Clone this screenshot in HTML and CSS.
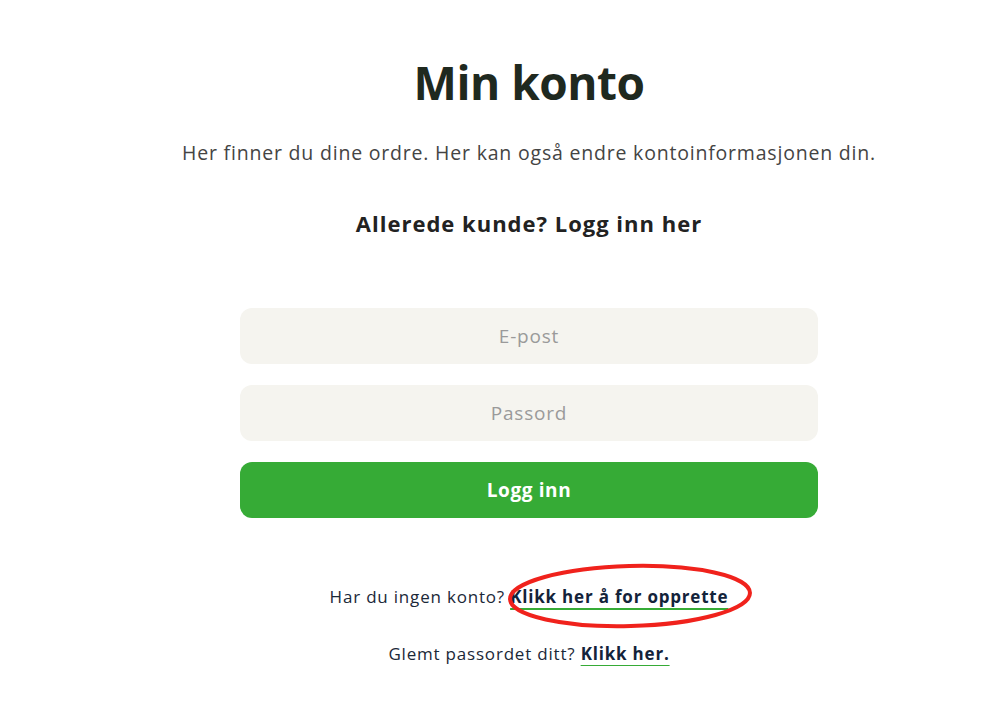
FILE: index.html
```html
<!DOCTYPE html>
<html>
<head>
    <title>Min konto</title>
    <link rel="stylesheet" href="styles.css">
</head>
<body>
    <div class="page">
        <h1>Min konto</h1>
        <p class="intro">Her finner du dine ordre. Her kan også endre kontoinformasjonen din.</p>
        <h2>Allerede kunde? Logg inn her</h2>

        <form class="login" action="#" method="POST">
            <input type="email" name="email" placeholder="E-post">
            <input type="password" name="password" placeholder="Passord">
            <button type="submit">Logg inn</button>
        </form>

        <p class="help signup">Har du ingen konto? <span class="mark"><a href="#">Klikk her å for opprette</a><svg class="circle" width="254" height="72" viewBox="0 0 254 72"><ellipse cx="127" cy="36" rx="120" ry="30" transform="rotate(-1.5 127 36)" fill="none" stroke="#f0221c" stroke-width="4"/></svg></span></p>
        <p class="help forgot">Glemt passordet ditt? <a href="#">Klikk her.</a></p>
    </div>
</body>
</html>
```

FILE: styles.css
```css
body {
    font-family: "Open Sans", Lato, sans-serif;
    background-color: #fff;
    margin: 0;
    padding: 0;
}

.page {
    width: 760px;
    margin: 0 0 0 149px;
    display: flex;
    flex-direction: column;
    align-items: center;
    text-align: center;
}

h1 {
    font-size: 46px;
    font-weight: 700;
    color: #1f291f;
    margin: 52px 0 0;
    line-height: 60px;
    letter-spacing: -0.5px;
}

.intro {
    font-size: 19.5px;
    letter-spacing: 0.8px;
    color: #444;
    margin: 28px 0 0;
    line-height: 26px;
}

h2 {
    font-size: 22px;
    letter-spacing: 1px;
    font-weight: 700;
    color: #222;
    margin: 42px 0 0;
    line-height: 30px;
}

.login {
    width: 578px;
    margin-top: 70px;
    display: flex;
    flex-direction: column;
    gap: 21px;
}

.login input,
.login button {
    height: 56px;
    border: none;
    border-radius: 12px;
    font-family: inherit;
    font-size: 19px;
    letter-spacing: 0.8px;
    text-align: center;
    box-sizing: border-box;
}

.login input {
    background-color: #f5f4ef;
    color: #333;
}

.login input::placeholder {
    color: #9a9a9a;
}

.login button {
    background-color: #36ab36;
    color: #fff;
    font-weight: 700;
    letter-spacing: 0.6px;
    cursor: pointer;
}

.help {
    font-size: 17px;
    letter-spacing: 0.8px;
    color: #1b2838;
    line-height: 24px;
    margin: 0;
}

.signup {
    margin-top: 67px;
}

.forgot {
    margin-top: 33px;
}

.help a {
    color: #13233a;
    font-weight: 700;
    text-decoration: underline;
    text-decoration-color: #36ab36;
    text-decoration-thickness: 2px;
    text-underline-offset: 5px;
}

.mark {
    position: relative;
}

.circle {
    position: absolute;
    left: -7px;
    top: -25px;
    pointer-events: none;
}
```
